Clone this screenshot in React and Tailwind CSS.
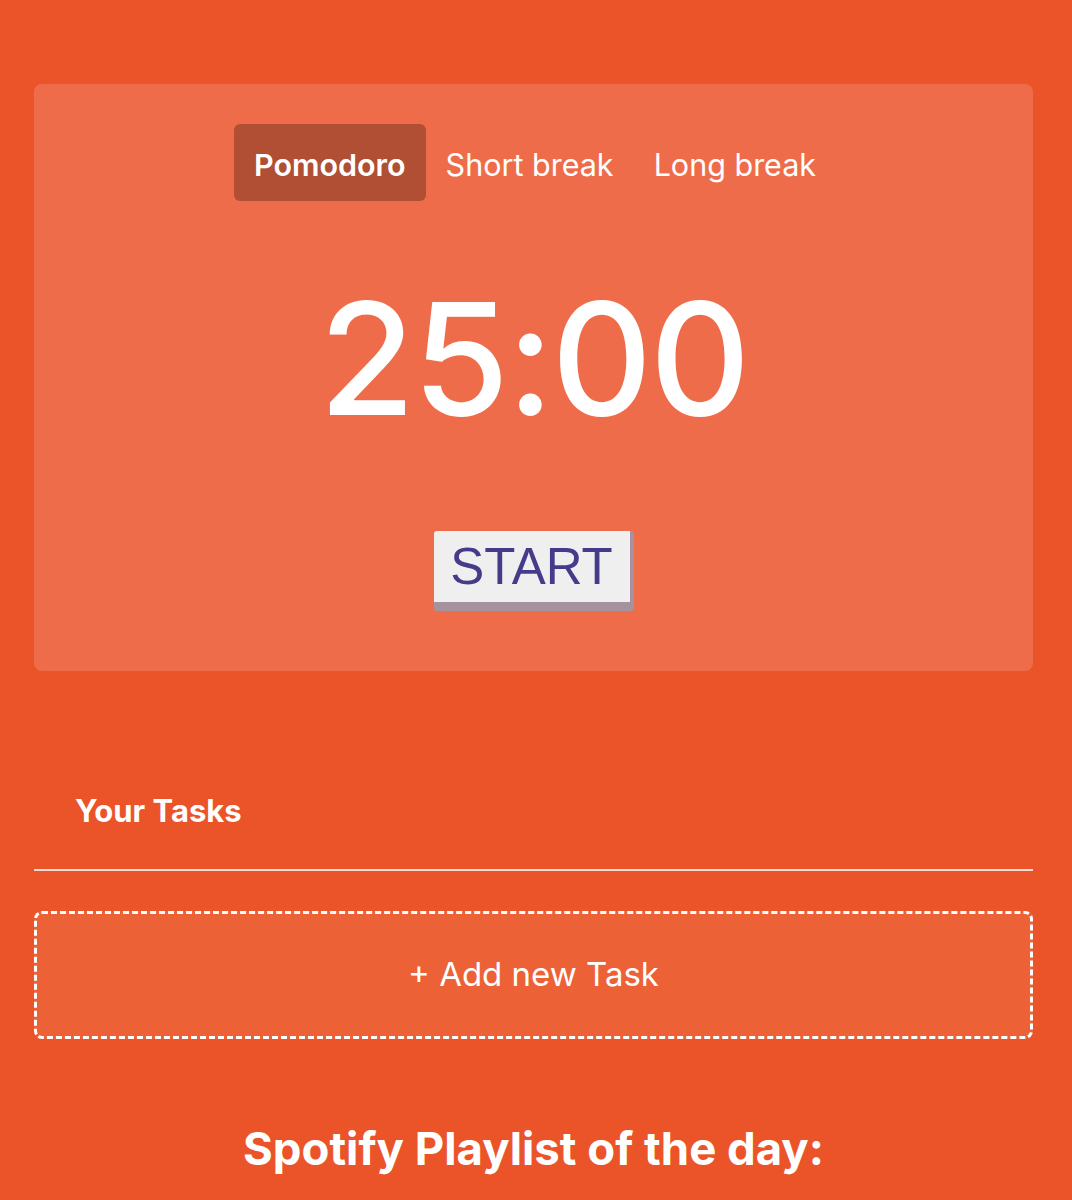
import React, { useState } from 'react';

const TABS = ['Pomodoro', 'Short break', 'Long break'];

const App = () => {
    const [tab, setTab] = useState('Pomodoro');

    return (
        <div className="min-h-screen bg-[#eb5429] pl-[34px] pr-[39px] pt-[84px] pb-10 font-['Inter',sans-serif] text-white">
            <div className="h-[587px] rounded-lg bg-[#ef6c4a] pt-10 flex flex-col items-center">
                <div className="flex pl-[3px]">
                    {TABS.map(t => (
                        <button
                            key={t}
                            onClick={() => setTab(t)}
                            className={`h-[77px] px-5 pt-1 rounded-md text-[30.5px] ${tab === t ? 'bg-[#b04f33] font-semibold' : 'font-normal'}`}
                        >
                            {t}
                        </button>
                    ))}
                </div>
                <div className="mt-[80px] text-[156px] leading-[156px] font-medium tracking-[-2.5px]">25:00</div>
                <button className="mt-[94px] h-[80px] w-[200px] rounded-[3px] bg-[#efefef] border-r-4 border-b-[9px] border-[#a6919f] font-['Liberation_Sans',Arial,sans-serif] text-[51px] leading-none text-[#443c8a]">
                    START
                </button>
            </div>

            <div className="mt-[122px] pl-[41px] text-[31px] font-bold leading-9">Your Tasks</div>
            <div className="mt-[40px] h-[2px] bg-[#f6ddd4]" />

            <button className="mt-[40px] w-full h-[128px] rounded-lg border-[3px] border-dashed border-white bg-[#ed6137] text-[33px]">
                + Add new Task
            </button>

            <h2 className="mt-[76px] text-center text-[45.5px] font-bold">Spotify Playlist of the day:</h2>
        </div>
    );
};

export default App;
